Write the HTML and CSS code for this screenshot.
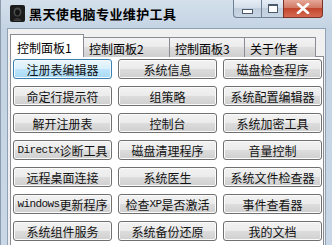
FILE: index.html
```html
<!DOCTYPE html>
<html lang="zh-CN">
<head>
    <meta charset="UTF-8">
    <title>黑天使电脑专业维护工具</title>
    <link rel="stylesheet" href="styles.css">
</head>
<body>
    <div class="window">
        <div class="titlebar">
            <svg class="app-icon" width="15" height="17" viewBox="0 0 15 17">
                <rect x="0" y="0" width="15" height="17" rx="2" fill="#1b1b1b"/>
                <ellipse cx="7.5" cy="7" rx="4" ry="4.5" fill="#4a4a4a"/>
                <ellipse cx="7.5" cy="7.5" rx="2.3" ry="3" fill="#151515"/>
                <path d="M3 16 Q7.5 10 12 16 Z" fill="#3c3c3c"/>
            </svg>
            <span class="title">黑天使电脑专业维护工具</span>
            <div class="caption">
                <div class="cap-btn min"><span class="min-glyph"></span></div>
                <div class="cap-btn max"><span class="max-glyph"></span></div>
                <div class="cap-btn close">
                    <svg width="14" height="11" viewBox="0 0 14 11">
                        <path d="M2 1 L12 10 M12 1 L2 10" stroke="#fff" stroke-width="2.6" stroke-linecap="round"/>
                    </svg>
                </div>
            </div>
        </div>
        <div class="client">
            <div class="tabs">
                <div class="tab active">控制面板1</div>
                <div class="tab t2">控制面板2</div>
                <div class="tab t3">控制面板3</div>
                <div class="tab t4">关于作者</div>
            </div>
            <div class="panel">
                <div class="grid">
                    <div class="btn focus">注册表编辑器</div>
                    <div class="btn">系统信息</div>
                    <div class="btn">磁盘检查程序</div>
                    <div class="btn">命定行提示符</div>
                    <div class="btn">组策略</div>
                    <div class="btn">系统配置编辑器</div>
                    <div class="btn">解开注册表</div>
                    <div class="btn">控制台</div>
                    <div class="btn">系统加密工具</div>
                    <div class="btn"><span class="lat">Directx</span>诊断工具</div>
                    <div class="btn">磁盘清理程序</div>
                    <div class="btn">音量控制</div>
                    <div class="btn">远程桌面连接</div>
                    <div class="btn">系统医生</div>
                    <div class="btn">系统文件检查器</div>
                    <div class="btn"><span class="lat">windows</span>更新程序</div>
                    <div class="btn">检查<span class="lat">XP</span>是否激活</div>
                    <div class="btn">事件查看器</div>
                    <div class="btn">系统组件服务</div>
                    <div class="btn">系统备份还原</div>
                    <div class="btn">我的文档</div>
                </div>
            </div>
        </div>
    </div>
</body>
</html>
```
FILE: styles.css
```css
body {
    margin: 0;
    background-color: #ffffff;
    font-family: "Noto Sans CJK SC", "Liberation Sans", sans-serif;
}
.window {
    width: 332px;
    height: 245px;
    overflow: hidden;
    background: linear-gradient(#d3dfeb, #c4d3e3 30px, #c9d7e6);
    box-sizing: border-box;
    border-left: 1px solid #8d9cac;
    display: flex;
    flex-direction: column;
}
.titlebar {
    height: 28px;
    display: flex;
    align-items: flex-start;
    flex-shrink: 0;
}
.app-icon {
    margin: 5px 0 0 9px;
}
.title {
    margin: 5px 0 0 4px;
    font-size: 13px;
    font-weight: bold;
    letter-spacing: 0.4px;
    line-height: 18px;
    color: #000;
}
.caption {
    margin-left: auto;
    margin-right: 9px;
    display: flex;
}
.cap-btn {
    height: 18px;
    box-sizing: border-box;
    border: 1px solid #6f8195;
    border-top: none;
    display: flex;
    justify-content: center;
    align-items: center;
}
.min {
    width: 28px;
    border-radius: 0 0 0 4px;
    border-right: none;
    background: linear-gradient(#e6edf5, #d2dde9 50%, #bfcddc 50%, #c9d6e4);
}
.max {
    width: 22px;
    border-right: none;
    background: linear-gradient(#e6edf5, #d2dde9 50%, #bfcddc 50%, #c9d6e4);
}
.close {
    width: 40px;
    border-radius: 0 0 4px 0;
    border-color: #7c3226;
    background: linear-gradient(#e6a898, #d27a66 45%, #c2452d 50%, #d66a52);
}
.min-glyph {
    width: 9px;
    height: 3px;
    margin-top: 6px;
    border: 1px solid #4a5a6c;
    background: #fff;
}
.max-glyph {
    width: 8px;
    height: 6px;
    border: 1px solid #4a5a6c;
    border-top-width: 2px;
    background: #fff;
}
.client {
    flex: 1;
    margin: 0 6px 0 6px;
    background-color: #f0f0f0;
    border: 1px solid #8fa2b6;
    border-bottom: none;
    padding-top: 5px;
}
.tabs {
    display: flex;
    align-items: flex-end;
    height: 23px;
    padding-left: 2px;
    position: relative;
    z-index: 1;
}
.tab {
    box-sizing: border-box;
    height: 20px;
    border: 1px solid #898c95;
    border-bottom: none;
    padding-left: 5px;
    font-size: 12px;
    line-height: 21px;
    color: #000;
    background: linear-gradient(#f3f3f3, #ebebeb 50%, #dddddd 50%, #cfcfcf);
    margin-left: -1px;
}
.tab.active {
    height: 23px;
    width: 74px;
    margin-left: 0;
    padding-left: 6px;
    line-height: 26px;
    background: #ffffff;
    position: relative;
    z-index: 2;
}
.t2 {
    width: 87px;
    padding-left: 5px;
}
.t3 {
    width: 76px;
}
.t4 {
    width: 72px;
}
.panel {
    margin: -1px 1px 0 2px;
    height: 240px;
    background-color: #ffffff;
    border: 1px solid #898c95;
    padding: 2px 0 0 2px;
    box-sizing: border-box;
}
.grid {
    display: grid;
    grid-template-columns: repeat(3, 99px);
    grid-auto-rows: 20px;
    column-gap: 6px;
    row-gap: 7px;
}
.btn {
    box-sizing: border-box;
    border: 1px solid #707070;
    border-radius: 3px;
    box-shadow: inset 0 0 0 1px #fbfbfb;
    background: linear-gradient(#f2f2f2, #ebebeb 50%, #dddddd 50%, #cfcfcf);
    display: flex;
    justify-content: center;
    align-items: center;
    font-size: 12px;
    color: #111;
    white-space: nowrap;
}
.btn.focus {
    border-color: #3c7fb1;
    box-shadow: inset 0 0 0 1px #f4fbff;
    background: linear-gradient(#eaf6fd, #d9f0fc 50%, #bee6fd 50%, #a7d9f5);
}
.lat {
    font-family: "Liberation Mono", monospace;
    font-size: 11px;
    letter-spacing: -0.6px;
}
```
